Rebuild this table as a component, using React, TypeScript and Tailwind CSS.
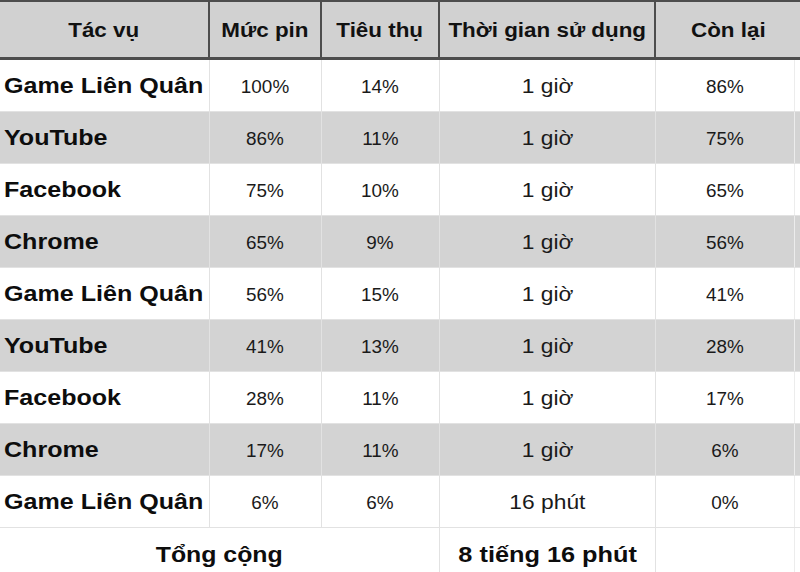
import React from "react";

const rows: [string, string, string, string, string][] = [
  ["Game Liên Quân", "100%", "14%", "1 giờ", "86%"],
  ["YouTube", "86%", "11%", "1 giờ", "75%"],
  ["Facebook", "75%", "10%", "1 giờ", "65%"],
  ["Chrome", "65%", "9%", "1 giờ", "56%"],
  ["Game Liên Quân", "56%", "15%", "1 giờ", "41%"],
  ["YouTube", "41%", "13%", "1 giờ", "28%"],
  ["Facebook", "28%", "11%", "1 giờ", "17%"],
  ["Chrome", "17%", "11%", "1 giờ", "6%"],
  ["Game Liên Quân", "6%", "6%", "16 phút", "0%"],
];

function H({ children }: { children: React.ReactNode }) {
  return <span className="inline-block scale-x-[1.12]">{children}</span>;
}

function N({ children }: { children: React.ReactNode }) {
  return <span className="inline-block scale-x-[1.05] pt-[3px]">{children}</span>;
}

export default function App() {
  return (
    <div className="w-[800px] h-[572px] overflow-hidden bg-white font-['Liberation_Sans',Arial,sans-serif]">
      {/* header */}
      <div className="flex h-[60px] bg-[#d1d1d1] border-t-2 border-b-[3px] border-[#4d4d4d] text-[20px] font-bold text-[#111]">
        <div className="w-[210px] flex items-center justify-center border-r-2 border-[#4d4d4d]"><H>Tác vụ</H></div>
        <div className="w-[112px] flex items-center justify-center border-r-2 border-[#4d4d4d]"><H>Mức pin</H></div>
        <div className="w-[118px] flex items-center justify-center border-r-2 border-[#4d4d4d]"><H>Tiêu thụ</H></div>
        <div className="w-[216px] flex items-center justify-center border-r-2 border-[#4d4d4d]"><H>Thời gian sử dụng</H></div>
        <div className="flex-1 flex items-center justify-center"><H>Còn lại</H></div>
      </div>
      {rows.map((r, i) => (
        <div
          key={i}
          className={
            "flex h-[52px] border-b border-[#e2e2e2] text-[18px] text-[#1a1a1a] " +
            (i % 2 === 1 ? "bg-[#d3d3d3]" : "bg-white")
          }
        >
          <div className="w-[210px] flex items-center pl-[4px] border-r border-[#e2e2e2] text-[22px] font-bold text-[#0d0d0d]">
            <span className="inline-block origin-left scale-x-[1.14]">{r[0]}</span>
          </div>
          <div className="w-[112px] flex items-center justify-center border-r border-[#e2e2e2]"><N>{r[1]}</N></div>
          <div className="w-[118px] flex items-center justify-center border-r border-[#e2e2e2]"><N>{r[2]}</N></div>
          <div className="w-[216px] flex items-center justify-center border-r border-[#e2e2e2] text-[20px]">
            <span className="inline-block scale-x-[1.14]">{r[3]}</span>
          </div>
          <div className="flex-1 flex items-center justify-center border-r border-[#ececec] mr-[5px]"><N>{r[4]}</N></div>
        </div>
      ))}
      <div className="flex h-[52px] bg-white text-[22px] font-bold text-[#0d0d0d]">
        <div className="w-[440px] flex items-start pt-[10px] justify-center border-r border-[#e2e2e2]">
          <span className="inline-block scale-x-[1.13]">Tổng cộng</span>
        </div>
        <div className="w-[216px] flex items-start pt-[10px] justify-center border-r border-[#e2e2e2]">
          <span className="inline-block scale-x-[1.15]">8 tiếng 16 phút</span>
        </div>
        <div className="flex-1 border-r border-[#ececec] mr-[5px]"></div>
      </div>
    </div>
  );
}
